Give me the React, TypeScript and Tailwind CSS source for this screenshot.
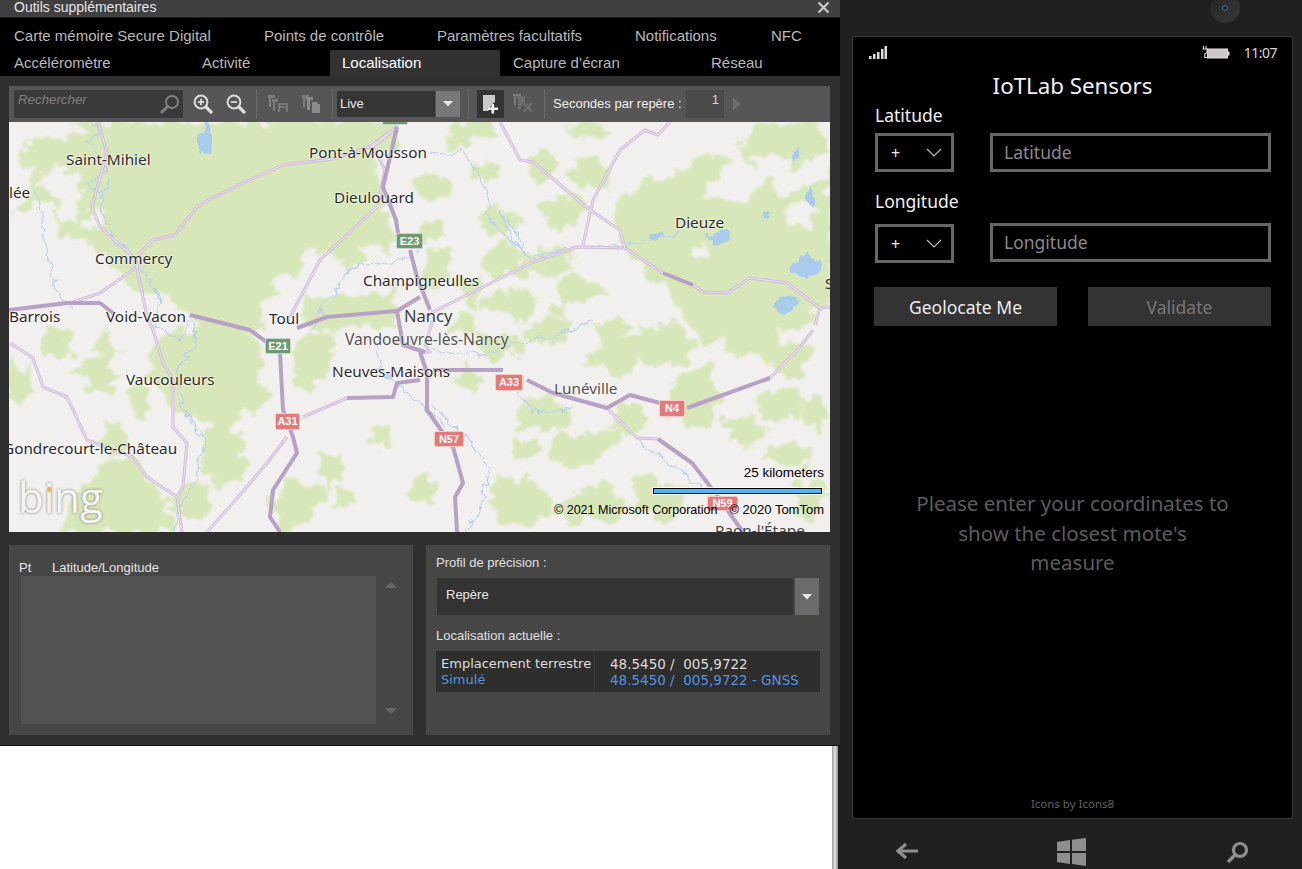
import React from "react";

const A = "font-['Liberation_Sans',Arial,sans-serif]";
const S = "font-['Noto_Sans',sans-serif]";

function blob(cx: number, cy: number, rx: number, ry: number, seed: number) {
  const n = 14;
  let s = seed * 9301 + 49297;
  const r = () => {
    s = (s * 9301 + 49297) % 233280;
    return s / 233280;
  };
  const pts: string[] = [];
  for (let i = 0; i < n; i++) {
    const a = (i / n) * Math.PI * 2;
    const k = 0.62 + r() * 0.6;
    pts.push(`${(cx + Math.cos(a) * rx * k).toFixed(1)},${(cy + Math.sin(a) * ry * k).toFixed(1)}`);
  }
  return pts.join(" ");
}

const greenPolys = [
  "9,215 30,195 34,170 20,160 30,140 60,135 70,122 395,122 400,150 375,152 385,205 398,240 378,262 340,268 322,262 300,270 288,300 262,296 262,330 215,345 195,320 170,300 130,290 115,265 85,240 60,235 50,200",
  "613,215 642,178 680,176 694,155 730,158 704,196 745,205 770,180 782,200 830,170 830,298 800,330 740,335 705,345 672,298 640,262 622,250",
  "738,150 752,123 812,122 830,150 792,170 750,172",
  "165,335 210,322 262,340 258,395 228,425 190,420 160,395 145,360",
  "296,340 332,330 332,370 305,392 290,385",
  "300,300 395,290 400,325 305,330",
  "95,470 130,455 160,490 175,532 60,532 70,500",
];
const greens: [number, number, number, number][] = [
  [20, 375, 14, 30], [55, 345, 22, 16], [95, 375, 22, 20], [110, 345, 18, 14], [115, 440, 16, 16], [140, 400, 12, 22],
  [222, 455, 26, 34], [190, 500, 20, 22], [255, 395, 14, 20], [295, 505, 30, 26], [330, 470, 14, 18], [380, 435, 12, 12],
  [345, 500, 14, 12], [425, 490, 16, 16], [470, 380, 14, 14], [540, 415, 30, 16], [565, 450, 22, 18], [525, 450, 18, 12],
  [590, 455, 14, 12], [615, 355, 30, 24], [660, 345, 30, 24], [690, 395, 28, 34], [630, 420, 24, 18], [600, 440, 24, 14],
  [500, 345, 28, 16], [465, 325, 14, 12], [545, 330, 22, 14], [610, 330, 20, 12], [755, 345, 30, 16], [790, 360, 20, 20],
  [780, 405, 24, 18], [815, 410, 15, 22], [745, 430, 22, 16], [790, 455, 22, 14], [520, 500, 28, 26], [600, 500, 25, 20],
  [660, 500, 28, 24], [810, 500, 18, 22], [570, 510, 16, 16], [470, 130, 22, 10], [485, 170, 14, 12], [542, 165, 14, 18],
  [590, 130, 24, 8], [565, 210, 22, 18], [590, 175, 20, 18], [500, 220, 22, 16], [430, 190, 20, 16], [430, 230, 14, 14],
  [440, 265, 16, 16], [505, 260, 22, 22], [550, 260, 28, 16], [580, 290, 26, 14], [520, 305, 20, 20], [470, 290, 10, 16],
  [495, 300, 14, 10], [460, 135, 14, 12], [555, 310, 10, 8], [825, 230, 8, 18], [430, 280, 12, 10],
];
const whites: [number, number, number, number][] = [
  [22, 300, 22, 70], [45, 260, 30, 26], [70, 280, 22, 22], [60, 180, 20, 16], [60, 130, 28, 10], [120, 340, 18, 10],
  [300, 285, 24, 18], [320, 262, 18, 12], [375, 255, 14, 10], [160, 320, 18, 12], [95, 220, 10, 10], [70, 210, 12, 16],
  [800, 215, 14, 14], [700, 250, 9, 8], [770, 165, 20, 12],
];
const lakes: [number, number, number, number][] = [
  [205, 141, 11, 15], [722, 237, 13, 8], [805, 267, 14, 11], [787, 303, 12, 9], [811, 195, 4, 9], [766, 215, 7, 3],
  [655, 237, 8, 3], [795, 155, 4, 5],
];
const rivers = [
  "92,122 100,135 88,140 95,150 105,170 95,178 88,185 102,195 110,180 100,208 115,240 130,252 150,280 160,300 155,325 180,340 192,312 195,345 178,365 180,400 195,430 205,440 195,480 180,510 175,532",
  "430,152 450,155 462,150 480,175 490,205 485,215 510,240 520,250 525,245 500,210 518,248 530,258 560,250 620,246 660,238 680,232",
  "35,190 45,240 55,290 75,310",
  "310,330 340,280 360,265 400,260 420,250",
  "430,350 480,355 510,345 560,335 590,320",
  "510,380 530,410 560,412 575,405",
  "432,405 470,440 490,470 480,510 465,532",
  "638,442 680,470 710,495",
  "375,340 380,370 410,395 445,425",
];
const mainRoads = [
  "9,310 67,303 100,303 113,313",
  "190,315 250,330 272,346",
  "280,353 283,410 293,437 297,453 273,490 270,517 280,532",
  "297,328 327,317 397,311 420,297",
  "397,311 403,345 425,352",
  "397,127 383,187 396,220 398,233",
  "410,250 417,277 430,310",
  "347,398 393,397 397,383 420,380",
  "420,352 427,373 427,410 453,447 463,483 455,497 457,532",
  "433,370 503,370",
  "527,380 553,393 607,408 630,395 660,403",
  "687,408 770,378",
  "658,439 692,463 713,490 743,532",
  "663,273 693,285",
];
const minorRoads = [
  "333,159 283,165 243,183 210,199 197,207 175,235 153,240 140,253 137,267 100,293 73,302",
  "98,122 107,153 100,177 92,207 100,227 133,257 137,267 147,317 153,330 163,363 173,380 173,427 187,443 183,487 177,497 182,532",
  "10,343 33,358 43,387 67,397 87,440 133,457 147,477 177,497",
  "290,317 320,260 377,207",
  "333,159 375,145 397,127 372,145 385,170 378,205",
  "287,437 267,463 233,503 207,532",
  "303,417 347,398",
  "500,122 520,160 533,162 590,210 620,230 625,248 663,273",
  "693,285 703,292 727,293 750,278 787,283 820,308 830,307",
  "670,122 658,135 645,130 620,150 593,200 583,245",
  "623,248 577,247 533,262 497,280 463,297 437,310 423,318",
  "607,408 637,438 658,439",
  "770,378 800,347 813,330",
  "820,308 815,325",
  "433,320 425,345 430,352 420,352",
];

const labels: [string, string][] = [
  ["Saint-Mihiel", "left-[57px] top-[27px]"],
  ["Pont-à-Mousson", "left-[300px] top-[20px]"],
  ["Dieulouard", "left-[325px] top-[65px]"],
  ["Dieuze", "left-[666px] top-[90px]"],
  ["Commercy", "left-[86px] top-[126px]"],
  ["Champigneulles", "left-[354px] top-[148px]"],
  ["Barrois", "left-[0px] top-[184px]"],
  ["Void-Vacon", "left-[97px] top-[184px]"],
  ["Toul", "left-[260px] top-[186px]"],
  ["Neuves-Maisons", "left-[323px] top-[239px]"],
  ["Vaucouleurs", "left-[117px] top-[247px]"],
  ["Gondrecourt-le-Château", "left-[-6px] top-[316px]"],
  ["lée", "left-[0px] top-[60px]"],
];

function Zoom({ plus }: { plus: boolean }) {
  return (
    <svg width="20" height="20" viewBox="0 0 20 20" fill="none" stroke="#dcdcdc">
      <circle cx="8" cy="8" r="6.4" strokeWidth="2" />
      <path d="M13 13l5 5" strokeWidth="3.2" strokeLinecap="round" />
      <path d="M4.8 8h6.4" strokeWidth="1.8" />
      {plus && <path d="M8 4.8v6.4" strokeWidth="1.8" />}
    </svg>
  );
}

function FlagH() {
  return (
    <svg width="22" height="20" viewBox="0 0 22 20">
      <path d="M0 1h7v3H3v9H1V4H0z" fill="#7d7d7d" />
      <path d="M4 5h6v3H7v9H5V8H4z" fill="#7d7d7d" />
      <path d="M10 9h10v9h-2v-4h-6v4h-2zM12 11v1h6v-1z" fill="#777" fillRule="evenodd" />
    </svg>
  );
}
function FlagT() {
  return (
    <svg width="22" height="20" viewBox="0 0 22 20">
      <path d="M0 1h7v3H3v9H1V4H0z" fill="#7d7d7d" />
      <path d="M4 3h7v3H8v10H5V6H4z" fill="#8a8a8a" />
      <path d="M10 8h5l1 2h2v9h-8z" fill="#8c8c8c" />
    </svg>
  );
}
function FlagX() {
  return (
    <svg width="22" height="22" viewBox="0 0 22 22">
      <path d="M0 1h8v2H3v9H1V3H0z" fill="#7a7a7a" />
      <path d="M4 3h8v5l-4 5v3H5V6H4z" fill="#6e6e6e" />
      <path d="M10 11l1.6-1.4 3.2 3.2 3.2-3.2 1.6 1.4-3.4 3.4 3.4 3.4-1.6 1.4-3.2-3.2-3.2 3.2-1.6-1.4 3.4-3.4z" fill="#717171" />
    </svg>
  );
}
function FlagAdd() {
  return (
    <svg width="18" height="20" viewBox="0 0 18 20">
      <path d="M1 1h12v7l-4 3v1L6 17H1z" fill="#c9c9c9" />
      <path d="M9.5 10h2.6v3.4H16v2.6h-3.9v3.6H9.5V16H6v-2.6h3.5z" fill="#f2f2f2" />
    </svg>
  );
}

function Caret() {
  return (
    <svg width="12" height="6" viewBox="0 0 12 6">
      <path d="M1 0h10L6 5.5z" fill="#e6e6e6" />
    </svg>
  );
}

function Sep() {
  return <div className="h-[30px] w-px bg-[#6a6a6a]" />;
}

function Shield({ text, red, cls }: { text: string; red?: boolean; cls: string }) {
  return (
    <div
      className={`absolute flex items-center justify-center rounded-[2px] border border-[#ffffff99] text-[11px] font-bold text-white ${A} ${
        red ? "bg-[#e37a78]" : "bg-[#6d9a72]"
      } ${cls}`}
    >
      {text}
    </div>
  );
}

function MapView() {
  return (
    <div className="relative h-[410px] w-[821px] overflow-hidden bg-[#f1f0ee]">
      <svg width="821" height="410" viewBox="9 122 821 410" className="block">
        <defs>
          <filter id="land" filterUnits="userSpaceOnUse" x="-20" y="100" width="880" height="460">
            <feTurbulence type="fractalNoise" baseFrequency="0.07" numOctaves="3" seed="4" result="n" />
            <feDisplacementMap in="SourceGraphic" in2="n" scale="22" xChannelSelector="R" yChannelSelector="G" />
            <feGaussianBlur stdDeviation="0.9" />
          </filter>
          <filter id="water" filterUnits="userSpaceOnUse" x="-20" y="100" width="880" height="460">
            <feTurbulence type="fractalNoise" baseFrequency="0.09" numOctaves="2" seed="9" result="n" />
            <feDisplacementMap in="SourceGraphic" in2="n" scale="12" xChannelSelector="R" yChannelSelector="G" />
            <feGaussianBlur stdDeviation="0.4" />
          </filter>
          <filter id="road">
            <feGaussianBlur stdDeviation="0.35" />
          </filter>
        </defs>
        <g filter="url(#land)">
          <g fill="#d8e7ba">
            {greenPolys.map((p, i) => (
              <polygon key={i} points={p} />
            ))}
            {greens.map((g, i) => (
              <polygon key={i} points={blob(g[0], g[1], g[2], g[3], i + 3)} />
            ))}
          </g>
          <g fill="#f1f0ee">
            {whites.map((g, i) => (
              <polygon key={i} points={blob(g[0], g[1], g[2], g[3], i + 40)} />
            ))}
          </g>
        </g>
        <g filter="url(#water)">
          <g fill="#a9cbec">
            {lakes.map((g, i) => (
              <polygon key={i} points={blob(g[0], g[1], g[2], g[3], i + 70)} />
            ))}
          </g>
          <g fill="none" stroke="#b4d0ee" strokeWidth="1.2" strokeLinejoin="round">
            {rivers.map((p, i) => (
              <polyline key={i} points={p} />
            ))}
          </g>
        </g>
        <g filter="url(#road)">
          <g fill="none" stroke="#cdb9d9" strokeWidth="3" strokeLinejoin="round">
            {minorRoads.map((p, i) => (
              <polyline key={i} points={p} />
            ))}
          </g>
          <g fill="none" stroke="#ecdff0" strokeWidth="1.2" strokeLinejoin="round">
            {minorRoads.map((p, i) => (
              <polyline key={i} points={p} />
            ))}
          </g>
          <g fill="none" stroke="#b7a1c5" strokeWidth="4" strokeLinejoin="round">
            {mainRoads.map((p, i) => (
              <polyline key={i} points={p} />
            ))}
          </g>
        </g>
      </svg>

      <Shield text="" cls="left-[373px] top-[-8px] h-[11px] w-[26px]" />
      <Shield text="E23" cls="left-[387px] top-[111px] h-[16px] w-[27px]" />
      <Shield text="E21" cls="left-[256px] top-[216px] h-[16px] w-[26px]" />
      <Shield text="A31" red cls="left-[266px] top-[291px] h-[17px] w-[25px]" />
      <Shield text="A33" red cls="left-[486px] top-[252px] h-[17px] w-[28px]" />
      <Shield text="N4" red cls="left-[650px] top-[278px] h-[17px] w-[26px]" />
      <Shield text="N57" red cls="left-[425px] top-[309px] h-[16px] w-[30px]" />
      <Shield text="N59" red cls="left-[698px] top-[374px] h-[15px] w-[31px]" />

      {labels.map(([t, c]) => (
        <span
          key={t}
          className={`absolute whitespace-nowrap text-[15.3px] leading-5 text-[#2b2b2b] [text-shadow:0_0_2px_#fff,0_0_2px_#fff] ${S} ${c}`}
        >
          {t}
        </span>
      ))}
      <span className={`absolute left-[395px] top-[184px] whitespace-nowrap text-[16.5px] leading-5 text-[#3d3d3d] [text-shadow:0_0_2px_#fff] ${S}`}>
        Nancy
      </span>
      <span className={`absolute left-[336px] top-[207px] whitespace-nowrap text-[15.6px] leading-5 text-[#555] [text-shadow:0_0_2px_#fff] ${S}`}>
        Vandoeuvre-lès-Nancy
      </span>
      <span className={`absolute left-[545px] top-[256px] whitespace-nowrap text-[15.3px] leading-5 text-[#555] [text-shadow:0_0_2px_#fff] ${S}`}>
        Lunéville
      </span>
      <span className={`absolute left-[706px] top-[398px] whitespace-nowrap text-[15.3px] leading-5 text-[#444] ${S}`}>Raon-l'Étape</span>
      <span className={`absolute left-[816px] top-[151px] text-[15.3px] leading-5 text-[#333] ${S}`}>S</span>

      <div className={`absolute right-[6px] top-[343px] text-[13.5px] leading-4 text-black ${A}`}>25 kilometers</div>
      <div className="absolute left-[643px] top-[365px] h-[8px] w-[171px] border border-white bg-black p-px">
        <div className="h-full w-full bg-[#4fb6f7]" />
      </div>
      <div className={`absolute left-[545px] top-[380px] whitespace-nowrap text-[12.5px] leading-4 text-black ${A}`}>© 2021 Microsoft Corporation</div>
      <div className={`absolute right-[6px] top-[380px] whitespace-nowrap text-[13px] leading-4 text-black ${A}`}>© 2020 TomTom</div>

      <div className="absolute left-[9px] top-[355px] font-['Open_Sans',sans-serif] text-[42px] font-normal leading-10 text-[#f4f4f4] [text-shadow:0_0_3px_#777]">
        bing
      </div>
      <div className="absolute left-[38px] top-[365px] h-[5px] w-[5px] rounded-full bg-[#f0b050]" />
    </div>
  );
}

function Toolbar() {
  return (
    <div className="flex h-[36px] w-[821px] items-center bg-[#555655]">
      <div className="ml-[5px] flex h-[28px] w-[169px] items-center justify-between bg-[#393a39] pl-[4px] pr-[3px]">
        <span className="-mt-[9px] text-[13.3px] italic text-[#808080]">Rechercher</span>
        <svg width="20" height="20" viewBox="0 0 20 20" fill="none" stroke="#7f7f7f">
          <circle cx="12" cy="8" r="6" strokeWidth="2" />
          <path d="M7.5 12.5L2 18" strokeWidth="3" strokeLinecap="round" />
        </svg>
      </div>
      <div className="ml-[10px]"><Zoom plus /></div>
      <div className="ml-[13px]"><Zoom plus={false} /></div>
      <div className="ml-[10px]"><Sep /></div>
      <div className="ml-[11px]"><FlagH /></div>
      <div className="ml-[12px]"><FlagT /></div>
      <div className="ml-[8px]"><Sep /></div>
      <div className="ml-[4px] flex h-[26px] w-[98px] items-center bg-[#343534] pl-[3px] text-[13px] text-[#e8e8e8]">Live</div>
      <div className="ml-px flex h-[26px] w-[24px] items-center justify-center bg-[#787878]"><Caret /></div>
      <div className="ml-[8px]"><Sep /></div>
      <div className="ml-[8px] flex h-[28px] w-[27px] items-center justify-center bg-[#333433]"><FlagAdd /></div>
      <div className="ml-[9px]"><FlagX /></div>
      <div className="ml-[9px]"><Sep /></div>
      <span className="ml-[8px] w-[133px] whitespace-nowrap text-[13px] text-[#f0f0f0]">Secondes par repère :</span>
      <div className="flex h-[28px] w-[38px] justify-end bg-[#494a49] pr-[5px] text-[13px] leading-[20px] text-[#d8d8d8]">1</div>
      <svg className="ml-[9px]" width="9" height="12" viewBox="0 0 9 12">
        <path d="M0 0l8 6-8 6z" fill="#6c6c6c" />
      </svg>
    </div>
  );
}

function ToolWindow() {
  const row1: [string, string][] = [
    ["Carte mémoire Secure Digital", "w-[250px]"],
    ["Points de contrôle", "w-[173px]"],
    ["Paramètres facultatifs", "w-[198px]"],
    ["Notifications", "w-[136px]"],
    ["NFC", "w-[60px]"],
  ];
  return (
    <div className={`h-[746px] w-[840px] border-b border-[#111] bg-[#2f2f2f] ${A}`}>
      <div className="flex h-[18px] items-center justify-between border-b border-[#1c1c1c] bg-[#404040] pb-[2px] pl-[14px] pr-[10px] text-[14px] text-[#e6e6e6]">
        <span>Outils supplémentaires</span>
        <svg width="13" height="13" viewBox="0 0 13 13" stroke="#c9c9c9" strokeWidth="2.2">
          <path d="M1.5 1.5l10 10M11.5 1.5l-10 10" />
        </svg>
      </div>
      <div className="h-[58px] bg-black pt-[5px] text-[15px] text-[#b9b9b9]">
        <div className="flex h-[26px] items-center pl-[14px]">
          {row1.map(([t, w]) => (
            <span key={t} className={`whitespace-nowrap ${w}`}>{t}</span>
          ))}
        </div>
        <div className="mt-px flex h-[26px] items-center pl-[14px]">
          <span className="w-[188px]">Accéléromètre</span>
          <span className="w-[128px]">Activité</span>
          <span className="flex h-[26px] w-[170px] items-center bg-[#323232] pl-[12px] text-white">Localisation</span>
          <span className="ml-[13px] w-[198px] whitespace-nowrap">Capture d’écran</span>
          <span>Réseau</span>
        </div>
      </div>
      <div className="px-[9px] pt-[10px]">
        <Toolbar />
        <MapView />
        <div className="mt-[13px] flex gap-[13px]">
          <div className="relative h-[190px] w-[404px] bg-[#464644] px-[12px] pt-[14px]">
            <div className="flex h-[17px] items-center text-[13px] text-[#e4e4e4]">
              <span className="-ml-[2px] w-[33px]">Pt</span>
              <span>Latitude/Longitude</span>
            </div>
            <div className="h-[148px] w-[355px] bg-[#515351]" />
            <svg className="absolute left-[376px] top-[37px]" width="12" height="6" viewBox="0 0 12 6">
              <path d="M0 6h12L6 0z" fill="#666664" />
            </svg>
            <svg className="absolute left-[376px] top-[163px]" width="12" height="6" viewBox="0 0 12 6">
              <path d="M0 0h12L6 6z" fill="#666664" />
            </svg>
          </div>
          <div className="h-[190px] w-[404px] bg-[#464644] px-[10px] pt-[9px] text-[13px] text-[#e0e0e0]">
            <div className="h-[24px] leading-[17px]">Profil de précision :</div>
            <div className="flex h-[37px] w-[383px] pl-px">
              <div className="flex w-[356px] items-center bg-[#333331] pb-[3px] pl-[9px] text-[#e8e8e8]">Repère</div>
              <div className="ml-[2px] flex w-[24px] items-center justify-center bg-[#6b6b6b]"><Caret /></div>
            </div>
            <div className="mt-[12px] h-[24px] leading-[17px]">Localisation actuelle :</div>
            <div className="flex h-[41px] w-[384px] bg-[#2e2e2c] font-['DejaVu_Sans',sans-serif] text-[13px] leading-[16px]">
              <div className="w-[159px] whitespace-nowrap border-r border-[#353533] pl-[5px] pt-[5px]">
                <div className="text-[#dedede]">Emplacement terrestre</div>
                <div className="text-[#4f94e6]">Simulé</div>
              </div>
              <div className="whitespace-pre pl-[15px] pt-[5px] text-[13.5px]">
                <div className="text-[#dedede]">48.5450 /  005,9722</div>
                <div className="text-[#4f94e6]">48.5450 /  005,9722 - GNSS</div>
              </div>
            </div>
          </div>
        </div>
      </div>
    </div>
  );
}

function PlusCombo({ cls }: { cls: string }) {
  return (
    <div className={`flex h-[39px] w-[79px] items-center justify-between border-[3px] border-[#666] pl-[13px] pr-[9px] text-[16px] text-[#e8e8e8] ${cls}`}>
      <span>+</span>
      <svg width="16" height="9" viewBox="0 0 16 9" fill="none" stroke="#bdbdbd" strokeWidth="1.2">
        <path d="M1 1l7 7 7-7" />
      </svg>
    </div>
  );
}

function Field({ text }: { text: string }) {
  return (
    <div className="flex h-[39px] w-[281px] items-center border-[3px] border-[#666] pl-[11px] text-[17.5px] text-[#8a8a8a]">
      {text}
    </div>
  );
}

function Phone() {
  return (
    <div className={`relative flex h-[869px] w-[462px] flex-col bg-[#202020] ${S}`}>
      <div className="absolute left-[370px] top-[-7px] h-[30px] w-[30px] rounded-full bg-gradient-to-br from-[#242424] to-[#383838]">
        <div className="absolute left-[12px] top-[12px] h-[6px] w-[6px] rounded-full border border-[#3f6f9f] bg-[#182430]" />
      </div>
      <div className="ml-[12px] mt-[36px] flex h-[783px] w-[441px] flex-col border border-[#3a3a3a] bg-black">
        <div className="flex h-[31px] items-center justify-between pl-[16px] pr-[15px]">
          <svg width="18" height="14" viewBox="0 0 18 14" fill="#ddd">
            <rect x="0" y="10" width="2.5" height="3" />
            <rect x="4" y="8" width="2.5" height="5" />
            <rect x="8" y="6" width="2.5" height="7" />
            <rect x="12" y="3" width="2.5" height="10" />
            <rect x="15.5" y="0" width="2.5" height="13" />
          </svg>
          <div className="flex items-center gap-[14px]">
            <svg width="28" height="14" viewBox="0 0 28 14">
              <path d="M1.5 0v3M4 0v3M0.5 3h4.5v3.5L2.8 8v3.5H6" fill="none" stroke="#ddd" strokeWidth="1.1" />
              <rect x="5.5" y="3" width="20" height="9" fill="#cfc9c9" stroke="#ddd" strokeWidth="1" />
              <rect x="26" y="5.5" width="1.5" height="4" fill="#ddd" />
            </svg>
            <span className="text-[14px] leading-5 tracking-[-0.5px] text-[#d8d8d8]">11:07</span>
          </div>
        </div>
        <div className="mt-px h-[33px] text-center text-[22.3px] leading-[34px] text-[#f2f2f2]">IoTLab Sensors</div>
        <div className="ml-[22px] h-[26px] text-[17.5px] leading-[26px] text-[#f0f0f0]">Latitude</div>
        <div className="ml-[22px] mt-[5px] flex gap-[36px]">
          <PlusCombo cls="" />
          <Field text="Latitude" />
        </div>
        <div className="ml-[22px] mt-[16px] h-[26px] text-[17.5px] leading-[26px] text-[#f0f0f0]">Longitude</div>
        <div className="ml-[22px] mt-[9px] flex items-start gap-[36px]">
          <PlusCombo cls="mt-px" />
          <Field text="Longitude" />
        </div>
        <div className="ml-[21px] mt-[24px] flex gap-[31px]">
          <div className="flex h-[39px] w-[183px] items-center justify-center bg-[#333] pt-px text-[17.5px] text-[#ececec]">Geolocate Me</div>
          <div className="flex h-[39px] w-[183px] items-center justify-center bg-[#333] pt-px text-[17.5px] text-[#777]">Validate</div>
        </div>
        <div className="mx-auto mt-[163px] w-[314px] text-center text-[20.5px] leading-[29.5px] text-[#5c5c5c]">
          Please enter your coordinates to show the closest mote's measure
        </div>
        <div className="mt-auto pb-[6px] text-center text-[11.5px] leading-4 text-[#606060]">Icons by Icons8</div>
      </div>
      <div className="flex flex-1 items-start pl-[55px] pt-[23px]">
        <svg width="24" height="18" viewBox="0 0 24 18" fill="none" stroke="#8e8e8e" strokeWidth="3.2">
          <path d="M11 2L3 9l8 7M3 9h20" />
        </svg>
        <svg className="-mt-[4px] ml-[138px]" width="29" height="28" viewBox="0 0 29 28" fill="#8e8e8e">
          <path d="M0 4l13-2v11H0zM15 1.7L29 0v13H15zM0 15h13v11L0 24zM15 15h14v13l-14-2z" />
        </svg>
        <svg className="-mt-[1px] ml-[140px]" width="23" height="23" viewBox="0 0 23 23" fill="none" stroke="#8e8e8e">
          <circle cx="14" cy="9" r="6.5" strokeWidth="3.2" />
          <path d="M9 14l-7 7" strokeWidth="3.6" />
        </svg>
      </div>
    </div>
  );
}

export default function App() {
  return (
    <div className="flex h-[869px] w-[1302px] overflow-hidden bg-[#202020]">
      <div className="relative z-10 w-[840px]">
        <ToolWindow />
        <div className="flex h-[123px]">
          <div className="w-[832px] bg-white" />
          <div className="w-[6px] bg-gradient-to-r from-[#9a9a9a] via-[#e4e4e4] to-[#8a8a8a]" />
        </div>
      </div>
      <Phone />
    </div>
  );
}
